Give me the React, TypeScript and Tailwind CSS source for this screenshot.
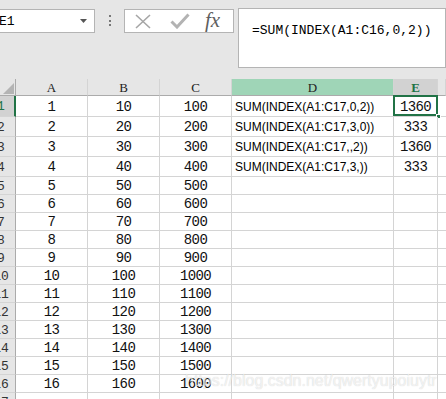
import React from 'react';

const mono = { fontFamily: '"Liberation Mono", "DejaVu Sans Mono", monospace' };

const rowHeights = [21, 20, 20, 20, 18, 18, 18, 18, 18, 18, 18, 18, 18, 18, 18, 18, 18];

const formulas = ['SUM(INDEX(A1:C17,0,2))', 'SUM(INDEX(A1:C17,3,0))', 'SUM(INDEX(A1:C17,,2))', 'SUM(INDEX(A1:C17,3,))'];
const results = ['1360', '333', '1360', '333'];

const cols = ['A', 'B', 'C', 'D', 'E', ''];

const CornerCell = () => (
    <div className="relative h-full border-r border-b border-r-[#ababab] border-b-[#ababab] bg-[#e6e6e6]">
        <svg className="absolute left-[3px] top-[4px]" width="11" height="11" viewBox="0 0 11 11">
            <polygon points="11,0 11,11 0,11" fill="#b4b4b4" />
        </svg>
    </div>
);

const App: React.FC = () => {
    return (
        <div className="relative w-[446px] h-[399px] overflow-hidden bg-[#e6e6e6]">
            {/* formula bar */}
            <div className="h-[79px] flex items-start pt-[8px]">
                <div className="mt-[1px] h-[24px] w-[96px] -ml-[1px] bg-white border border-[#b4b4b4] flex items-center justify-between pr-[7px]">
                    <span className="text-[13px] leading-none text-black -ml-[1px]" style={mono}>E1</span>
                    <svg width="7" height="4" viewBox="0 0 7 4">
                        <polygon points="0,0 7,0 3.5,4" fill="#555" />
                    </svg>
                </div>
                <div className="ml-[14px] mt-[7px] flex flex-col gap-[2.5px]">
                    <div className="w-[2px] h-[2px] bg-[#777]" />
                    <div className="w-[2px] h-[2px] bg-[#777]" />
                    <div className="w-[2px] h-[2px] bg-[#777]" />
                </div>
                <div className="ml-[13px] mt-[1px] h-[24px] w-[110px] bg-white border border-[#b4b4b4] flex items-center">
                    <svg className="ml-[10px]" width="16" height="15" viewBox="0 0 16 15">
                        <path d="M1 1 L15 14 M15 1 L1 14" stroke="#a6a6a6" strokeWidth="1.6" fill="none" />
                    </svg>
                    <svg className="ml-[19px]" width="20" height="16" viewBox="0 0 20 16">
                        <path d="M1.5 8.5 L7 14 L18.5 1.5" stroke="#b3b3b3" strokeWidth="3" fill="none" />
                    </svg>
                    <span className="ml-[15px] -mt-[1px] text-[21px] leading-none italic text-[#5f5f5f]" style={{ fontFamily: '"Liberation Serif", "DejaVu Serif", serif' }}>fx</span>
                </div>
                <div className="ml-[4px] h-[60px] w-[208px] bg-white border border-[#b4b4b4] pl-[13px] pt-[7px]">
                    <span className="text-[13px] leading-[16px] text-black whitespace-nowrap" style={mono}>=SUM(INDEX(A1:C16,0,2))</span>
                </div>
            </div>

            {/* grid */}
            <div className="grid grid-cols-[16px_72px_72px_72px_162px_44px_1fr] bg-white">
                <div className="h-[17px]"><CornerCell /></div>
                {cols.map((c) => {
                    const isD = c === 'D';
                    const isE = c === 'E';
                    return (
                        <div
                            key={c || 'F'}
                            className={`h-[17px] flex items-center justify-center border-r border-b border-r-[#d4d4d4] border-b-[#ababab] text-[13px] leading-none ${isD ? 'bg-[#9fd5b7] text-[#222]' : isE ? 'bg-[#d2d2d2] text-[#217346] font-bold' : 'bg-[#e6e6e6] text-[#222]'}`}
                            style={{ fontFamily: '"Liberation Serif", "DejaVu Serif", serif' }}
                        >
                            {c}
                        </div>
                    );
                })}

                {rowHeights.map((h, i) => {
                    const n = i + 1;
                    const sel = i === 0;
                    const inData = n <= 16;
                    return (
                        <React.Fragment key={n}>
                            <div
                                className={`overflow-hidden border-b border-b-[#d4d4d4] ${sel ? 'bg-[#d2d2d2] border-r-2 border-r-[#217346] text-[#217346]' : 'bg-[#e6e6e6] border-r border-r-[#ababab] text-[#333]'}`}
                                style={{ height: h }}
                            >
                                <div className="w-[30px] -ml-[14px] h-full flex items-center justify-center text-[13px] leading-none pt-[1px]" style={mono}>
                                    {n}
                                </div>
                            </div>
                            {[n, n * 10, n * 100].map((v, k) => (
                                <div
                                    key={k}
                                    className="flex items-center justify-center border-r border-b border-[#d4d4d4] text-[14px] tracking-[-0.6px] leading-none text-[#111] pt-[1px]"
                                    style={{ ...mono, height: h }}
                                >
                                    {inData ? v : ''}
                                </div>
                            ))}
                            <div
                                className="flex items-center pl-[3px] border-r border-b border-[#d4d4d4] text-[12px] leading-none text-black whitespace-nowrap pt-[1px]"
                                style={{ fontFamily: '"Liberation Sans", Arial, sans-serif', height: h }}
                            >
                                {formulas[i] ?? ''}
                            </div>
                            <div
                                className="relative flex items-center justify-center border-r border-b border-[#d4d4d4] text-[14px] tracking-[-0.6px] leading-none text-[#111] pt-[1px]"
                                style={{ ...mono, height: h }}
                            >
                                {results[i] ?? ''}
                                {sel && (
                                    <>
                                        <div className="absolute -left-[1px] -top-[1px] right-[-1px] bottom-[0px] border-2 border-[#217346]" />
                                        <div className="absolute right-[-4px] bottom-[-3px] w-[5px] h-[5px] bg-[#217346] border border-white" />
                                    </>
                                )}
                            </div>
                            <div className="border-b border-[#d4d4d4]" style={{ height: h }} />
                        </React.Fragment>
                    );
                })}
            </div>

            {/* watermark */}
            <div
                className="absolute left-[185px] top-[372px] text-[16px] leading-[18px] text-white/70 whitespace-nowrap [text-shadow:0_0_1px_rgba(0,0,0,0.2)]"
                style={{ fontFamily: '"Liberation Sans", Arial, sans-serif' }}
            >
                https://blog.csdn.net/qwertyupoiuytr
            </div>
        </div>
    );
};

export default App;
